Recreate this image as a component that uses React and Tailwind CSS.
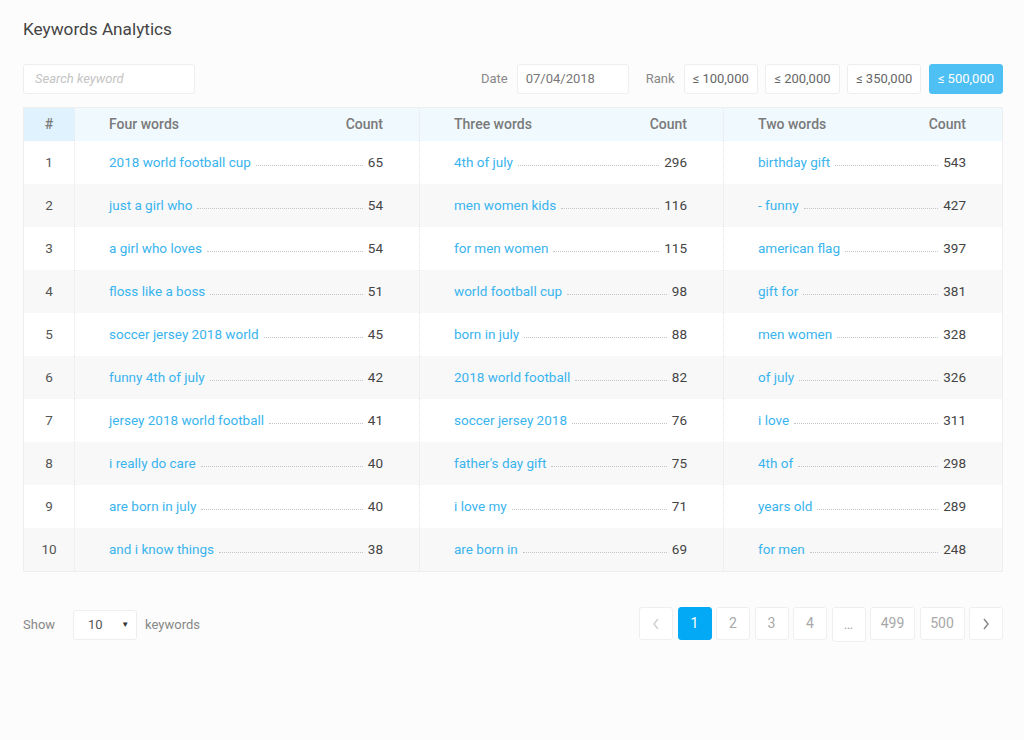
import React from "react";

const data = [
  [["2018 world football cup", 65], ["4th of july", 296], ["birthday gift", 543]],
  [["just a girl who", 54], ["men women kids", 116], ["- funny", 427]],
  [["a girl who loves", 54], ["for men women", 115], ["american flag", 397]],
  [["floss like a boss", 51], ["world football cup", 98], ["gift for", 381]],
  [["soccer jersey 2018 world", 45], ["born in july", 88], ["men women", 328]],
  [["funny 4th of july", 42], ["2018 world football", 82], ["of july", 326]],
  [["jersey 2018 world football", 41], ["soccer jersey 2018", 76], ["i love", 311]],
  [["i really do care", 40], ["father's day gift", 75], ["4th of", 298]],
  [["are born in july", 40], ["i love my", 71], ["years old", 289]],
  [["and i know things", 38], ["are born in", 69], ["for men", 248]],
];

function KwCell({ kw, count }) {
  return (
    <div className="flex items-center pl-[34px] pr-[36px] border-l border-dotted border-[#e6e6e6] text-[13.5px]">
      <span className="text-[#3ab4ee] whitespace-nowrap">{kw}</span>
      <span className="flex-1 mx-[5px] mt-[5px] border-b border-dotted border-[#c4c4c4]"></span>
      <span className="text-[#444]">{count}</span>
    </div>
  );
}

function HeadCell({ label }) {
  return (
    <div className="flex items-center justify-between pl-[34px] pr-[36px] border-l border-dotted border-[#e6e6e6] bg-[#f0f9fe] font-medium text-[#7a7a7a]">
      <span>{label}</span>
      <span>Count</span>
    </div>
  );
}

function PageBtn({ children, active, wide, tall }) {
  return (
    <div
      className={
        "flex items-center justify-center rounded-[3px] border text-[14px] " +
        (active
          ? "bg-[#03a9f4] border-[#03a9f4] text-white "
          : "bg-white border-[#efefef] text-[#a8a8a8] ") +
        (wide ? "w-[45px] " : "w-[34px] ") +
        (tall ? "h-[35px]" : "h-[33px]")
      }
    >
      {children}
    </div>
  );
}

export default function App() {
  return (
    <div
      className="min-h-[740px] bg-[#fcfcfc] pl-[23px] pr-[21px] pt-[18px] text-[14px] text-[#444]"
      style={{ fontFamily: "Roboto, 'Noto Sans', sans-serif" }}
    >
      <h1 className="text-[17.2px] text-[#444] leading-[22px]">Keywords Analytics</h1>

      <div className="mt-[24px] flex items-center h-[30px]">
        <div className="w-[172px] h-[30px] bg-white border border-[#eeeeee] rounded-[3px] flex items-center px-[11px] text-[13px] italic text-[#c4c4c4]">
          Search keyword
        </div>
        <div className="flex-1"></div>
        <span className="text-[13px] text-[#888] mr-[9px]">Date</span>
        <div className="w-[112px] h-[30px] bg-white border border-[#eeeeee] rounded-[3px] flex items-center px-[8px] text-[13px] text-[#777]">
          07/04/2018
        </div>
        <span className="text-[13px] text-[#888] ml-[17px] mr-[9px]">Rank</span>
        <div className="flex gap-[7.5px]">
          {["≤ 100,000", "≤ 200,000", "≤ 350,000"].map((r) => (
            <div
              key={r}
              className="h-[30px] px-[8px] bg-white border border-[#eeeeee] rounded-[3px] flex items-center text-[13px] text-[#666]"
            >
              {r}
            </div>
          ))}
          <div className="h-[30px] px-[8px] bg-[#4fc0f3] border border-[#4fc0f3] rounded-[3px] flex items-center text-[13px] text-white">
            ≤ 500,000
          </div>
        </div>
      </div>

      <div className="mt-[13px] border border-[#eeeeee] bg-white">
        <div className="grid grid-cols-[50px_345px_304px_1fr] h-[33px]">
          <div className="flex items-center justify-center bg-[#dff2fd] font-medium text-[#7a7a7a]">#</div>
          <HeadCell label="Four words" />
          <HeadCell label="Three words" />
          <HeadCell label="Two words" />
        </div>
        {data.map((row, i) => (
          <div
            key={i}
            className={
              "grid grid-cols-[50px_345px_304px_1fr] h-[43px] " +
              (i % 2 === 1 ? "bg-[#f8f8f8]" : "bg-white")
            }
          >
            <div className="flex items-center justify-center text-[#555] text-[13.5px]">{i + 1}</div>
            {row.map(([kw, c], j) => (
              <KwCell key={j} kw={kw} count={c} />
            ))}
          </div>
        ))}
      </div>

      <div className="mt-[35px] flex items-start">
        <div className="flex items-center h-[33px] mt-[1px]">
          <span className="text-[13px] text-[#888]">Show</span>
          <div className="ml-[18px] w-[64px] h-[30px] bg-white border border-[#eeeeee] rounded-[3px] flex items-center justify-between pl-[14px] pr-[7px] text-[13px] text-[#555]">
            <span>10</span>
            <span className="text-[8px] text-[#333]">▼</span>
          </div>
          <span className="ml-[8px] text-[13px] text-[#888]">keywords</span>
        </div>
        <div className="flex-1"></div>
        <div className="flex items-start gap-[4.5px]">
          <PageBtn>
            <svg width="10" height="14" viewBox="0 0 10 14" fill="none" stroke="#d0d0d0" strokeWidth="1.5">
              <path d="M7 2 L3 7 L7 12" />
            </svg>
          </PageBtn>
          <PageBtn active>1</PageBtn>
          <PageBtn>2</PageBtn>
          <PageBtn>3</PageBtn>
          <PageBtn>4</PageBtn>
          <PageBtn tall>…</PageBtn>
          <PageBtn wide>499</PageBtn>
          <PageBtn wide>500</PageBtn>
          <PageBtn>
            <svg width="10" height="14" viewBox="0 0 10 14" fill="none" stroke="#888" strokeWidth="1.5">
              <path d="M3 2 L7 7 L3 12" />
            </svg>
          </PageBtn>
        </div>
      </div>
    </div>
  );
}
